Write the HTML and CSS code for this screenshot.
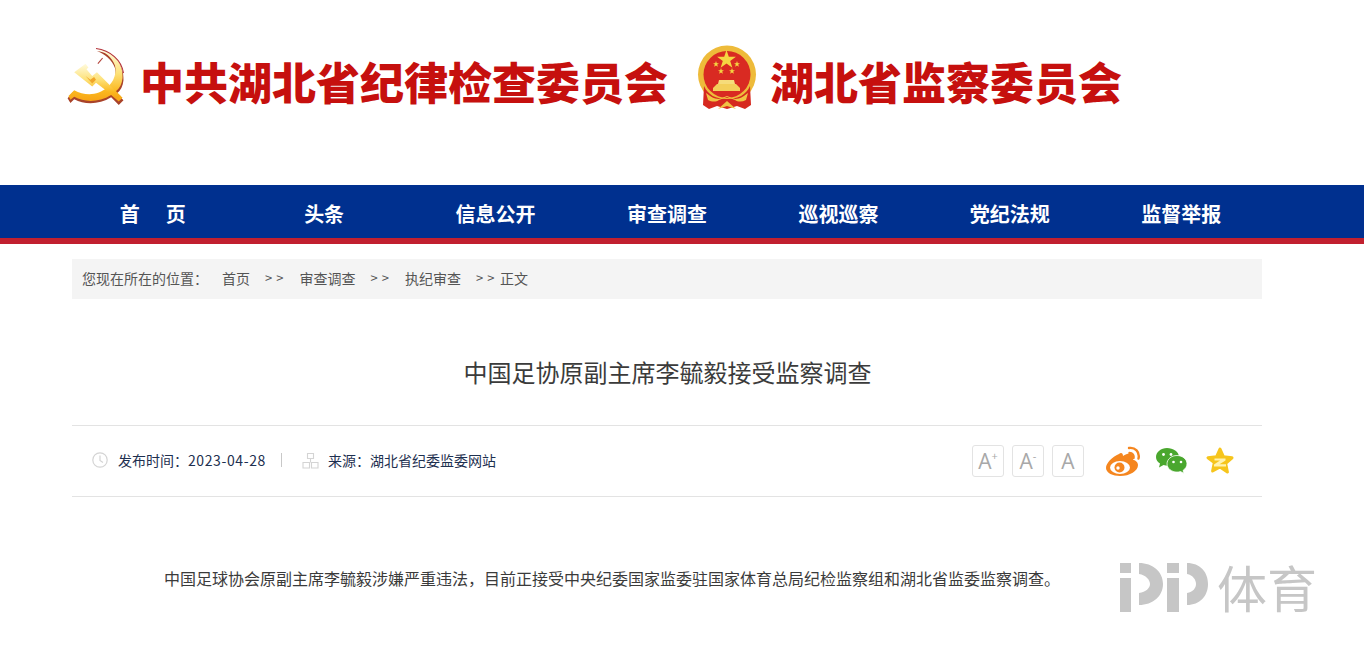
FILE: index.html
```html
<!DOCTYPE html>
<html lang="zh-CN">
<head>
<meta charset="utf-8">
<title>中国足协原副主席李毓毅接受监察调查</title>
<link rel="stylesheet" href="styles.css">
</head>
<body>
<header class="masthead">
  <svg class="party" viewBox="-2 -2 76 76" width="72" height="72">
    <defs>
      <linearGradient id="gold" x1="0" y1="0" x2="0" y2="1"><stop offset="0" stop-color="#fffbe0"/><stop offset=".45" stop-color="#fde27a"/><stop offset=".8" stop-color="#fbb81f"/><stop offset="1" stop-color="#f7a315"/></linearGradient>
    </defs>
    <path d="M37 8C54 10 66 22 65 39c-.5 6-3 11-7 14l7 7-5 5-8-8C39 65 24 65 13 59l-4 4-3-5 6-7C24 58 38 58 48 49 55 43 58 34 56 26 53 17 45 11 37 8z" fill="#a9432a" transform="translate(0 1.500)"/>
    <path d="M37 8C54 9 65 22 64 38c-.5 6-3 11-7 14l7 7-4 4-8-7C39 64 24 64 13 58l-4 3-2-4 6-6C24 57 38 57 48 48 55 42 58 33 56 25 53 16 45 10 37 8z" fill="url(#gold)"/>
    <path d="M13 32l12-9 3 4-2 2 6 7 5-4L62 57l-4 3-22-17-4 4z" fill="url(#gold)"/>
    <path d="M25 36l7 8 4-4-2-3-4 3z" fill="#f1a62a"/>
    <path d="M36 7C51 9 63 19 65 33" fill="none" stroke="#b3323a" stroke-width="1.200"/>
    <path d="M43 17l-5 6" fill="none" stroke="#b3423a" stroke-width="1.200"/>
  </svg>
  <h1 class="org org-party">中共湖北省纪律检查委员会</h1>
  <svg class="emblem" viewBox="0 0 72 72" width="72" height="72">
    <circle cx="35" cy="34.500" r="29" fill="#eebb3a"/>
    <circle cx="35" cy="34.500" r="23.500" fill="#d92a22"/>
    <path d="M34.500 10l2.300 6.700h7.100l-5.700 4.200 2.200 6.800-5.900-4.200-5.900 4.200 2.200-6.800-5.700-4.200h7.100z" fill="#f5d642"/>
    <path d="M24 21l.8 2.200H27l-1.800 1.300.7 2.200-1.900-1.300-1.900 1.300.7-2.200-1.800-1.300h2.200zM45 21l.8 2.200H48l-1.800 1.300.7 2.200-1.900-1.300-1.900 1.300.7-2.200-1.800-1.300h2.200zM29 28l.8 2.200H32l-1.800 1.300.7 2.200-1.900-1.300-1.900 1.300.7-2.200-1.800-1.300h2.200zM40 28l.8 2.200H43l-1.800 1.300.7 2.200-1.900-1.300-1.900 1.300.7-2.200-1.800-1.300h2.200z" fill="#f5d642"/>
    <path d="M26 44l1-4h15l1 4z" fill="#f6dc7a"/>
    <path d="M21 51v-3l4-4h19l4 4v3z" fill="#f3cf5a"/>
    <path d="M12 46c4 9 12 13 23 13s19-4 23-13l1 19-6 4-8-3-10 3-10-3-8 3-6-4z" fill="#d6291f"/>
    <path d="M14 53c4 3 8 6 13 6l8-3 8 3c5 0 9-3 13-6l-2 7c-4 2-8 2-11 0l-8-3-8 3c-3 2-7 2-11 0z" fill="#f0c343"/>
    <path d="M26 69l9-8 9 8-9-3z" fill="#f0c343"/>
  </svg>
  <h1 class="org org-state">湖北省监察委员会</h1>
</header>

<nav class="nav">
  <ul class="nav-list">
    <li><a class="nav-link nav-link-home">首　页</a></li>
    <li><a class="nav-link">头条</a></li>
    <li><a class="nav-link">信息公开</a></li>
    <li><a class="nav-link">审查调查</a></li>
    <li><a class="nav-link">巡视巡察</a></li>
    <li><a class="nav-link">党纪法规</a></li>
    <li><a class="nav-link">监督举报</a></li>
  </ul>
</nav>

<main class="wrap">
  <div class="crumbs">
    <span class="crumb-label">您现在所在的位置：</span>
    <a class="crumb">首页</a><span class="sep">&gt;&gt;</span>
    <a class="crumb">审查调查</a><span class="sep">&gt;&gt;</span>
    <a class="crumb">执纪审查</a><span class="sep last">&gt;&gt;</span>
    <span class="crumb">正文</span>
  </div>

  <h2 class="title">中国足协原副主席李毓毅接受监察调查</h2>

  <div class="meta">
    <div class="meta-left">
      <svg class="mi" viewBox="0 0 16 16" width="16" height="16"><circle cx="8" cy="8" r="7.200" fill="none" stroke="#d4d4d4" stroke-width="1.200"/><path d="M8 3.500V8.500l3 2" fill="none" stroke="#d4d4d4" stroke-width="1.200"/></svg>
      <span class="meta-date">发布时间：<span class="digits">2023-04-28</span></span>
      <span class="bar"></span>
      <svg class="mi" viewBox="0 0 17 17" width="17" height="17"><path d="M5.500 1.500h6v5h-6zM1 10.500h6.500v5.500H1zM9.500 10.500H16v5.500H9.500zM8.500 6.500v4" fill="none" stroke="#d4d4d4" stroke-width="1.100"/></svg>
      <span class="meta-src">来源：湖北省纪委监委网站</span>
    </div>
    <div class="meta-right">
      <span class="size">A<sup class="mark">+</sup></span>
      <span class="size">A<sup class="mark">-</sup></span>
      <span class="size">A</span>
      <svg class="share s-weibo" viewBox="0 0 34 30" width="34" height="30">
        <path d="M13 8C6 11 0 17 0 22c0 5 7 8 14 8 10 0 18-5 18-11 0-3-3-5-5-5 1-3 0-6-2-6-2-1-5 0-8 2 0-3-2-4-4-2z" fill="#f5861f"/>
        <ellipse cx="14" cy="21.500" rx="10" ry="6.500" fill="#fff"/>
        <circle cx="13.500" cy="21.500" r="5" fill="#f5861f"/>
        <circle cx="12" cy="22" r="1.700" fill="#fff"/>
        <path d="M23 2c6-1 11 4 9.500 10.500M23.500 7c3 0 4.500 2 4 5" fill="none" stroke="#f5861f" stroke-width="2.400" stroke-linecap="round"/>
      </svg>
      <svg class="share s-wechat" viewBox="0 0 32 26" width="32" height="26">
        <path d="M11 0C5 0 0 4 0 9c0 3 1.500 5 4 6.500L3 19.500l4.500-2.500c1.500.5 3 .7 4.500.7 6 0 11-4 11-9S17 0 11 0z" fill="#4aa72e"/>
        <path d="M21 7.500c-5.500 0-10 3.700-10 8.300s4.500 8.300 10 8.300c1.300 0 2.500-.2 3.500-.6l3.500 2-1-3c2.500-1.700 4-4 4-6.700 0-4.600-4.500-8.300-10-8.300z" fill="#4aa72e" stroke="#fff" stroke-width=".8"/>
        <circle cx="7.500" cy="6.500" r="1.400" fill="#fff"/><circle cx="15" cy="6.500" r="1.400" fill="#fff"/><circle cx="17.500" cy="14" r="1.300" fill="#fff"/><circle cx="25" cy="14" r="1.300" fill="#fff"/>
      </svg>
      <svg class="share s-qzone" viewBox="0 0 28 28" width="28" height="28">
        <path d="M14 2l3.500 7.800 8.500 1-6.300 5.700 1.700 8.500L14 20l-7.400 4 1.700-8.500L2 10.800l8.500-1z" fill="#f6c51c" stroke="#f6c51c" stroke-width="3" stroke-linejoin="round"/>
        <path d="M8.500 11.500h11v2l-6 3.800h6.500v2.200H8v-2l6-4H8.500z" fill="#fff3b0"/>
      </svg>
    </div>
  </div>

  <p class="body">中国足球协会原副主席李毓毅涉嫌严重违法，目前正接受中央纪委国家监委驻国家体育总局纪检监察组和湖北省监委监察调查。</p>
</main>

<div class="watermark">
  <svg class="wm-logo" viewBox="0 0 90 52" width="90" height="52">
    <path d="M1 1h11v10H1zM1 16h11v34H1zM20 1c14 0 24 9 24 21s-10 21-24 21V31c7-1 11-5 11-9s-4-9-11-10zM48 1h12v10H48zM48 16h12v34H48zM68 1c13 0 21 9 21 21s-8 21-21 21V31c6-1 9-5 9-9s-3-9-9-10z" fill="#c6c6c6"/>
  </svg>
  <span class="wm-text">体育</span>
</div>
</body>
</html>
```
FILE: styles.css
```css
* { box-sizing: border-box; }
html, body { margin: 0; padding: 0; height: 661px; overflow: hidden; background: #fff; }
body { position: relative; font-family: "Noto Sans CJK SC", "Liberation Sans", sans-serif; color: #333; }
h1, h2, p, ul { margin: 0; padding: 0; }

.masthead { height: 185px; display: flex; align-items: flex-start; padding: 40px 0 0 60px; }
.party { margin-right: 8px; flex: none; }
.emblem { margin: 0 6px 0 24px; flex: none; }
.org { font-size: 44px; line-height: 64px; margin-top: 9px; font-weight: 900; color: #c6100e; white-space: nowrap; }

.nav { height: 59px; background: #00308f; border-bottom: 6px solid #c1202f; }
.nav-list { list-style: none; width: 1200px; margin-left: 67px; display: grid; grid-template-columns: repeat(7, 1fr); }
.nav-link { display: block; height: 53px; line-height: 58px; text-align: center; color: #fff; font-size: 20px; font-weight: 700; }
.nav-link-home { letter-spacing: 3px; text-indent: 3px; }

.wrap { width: 1190px; margin: 15px 0 0 72px; }
.crumbs { height: 40px; padding: 0 0 3px 10px; background: #f4f4f4; display: flex; align-items: center; font-size: 14px; color: #555; white-space: nowrap; }
.crumb-label { width: 140px; }
.sep { margin: 0 15px; width: 19.5px; letter-spacing: 4px; font-size: 13px; }
.sep.last { margin-right: 4.500px; }

.title { margin-top: 53px; height: 41px; font-size: 24px; line-height: 40px; font-weight: 400; text-align: center; padding-left: 1px; color: #3b3b3b; }

.meta { margin-top: 32px; height: 72px; padding: 0 28px 2px 20px; border-top: 1px solid #e3e3e3; border-bottom: 1px solid #e3e3e3; display: flex; justify-content: space-between; align-items: center; font-size: 14px; color: #1e3050; }
.meta-left, .meta-right { display: flex; align-items: center; }
.meta-right { margin-top: 2px; }
.mi { flex: none; }
.meta-date { margin-left: 10px; }
.digits { letter-spacing: .6px; }
.bar { width: 1px; height: 14px; background: #c8c8c8; margin: 0 20px 0 15px; }
.meta-src { margin-left: 9px; }
.size { width: 32px; height: 32px; margin-right: 8px; border: 1px solid #e3e3e3; border-radius: 3px; display: flex; align-items: center; justify-content: center; font-family: "Open Sans", sans-serif; font-size: 21px; font-weight: 400; color: #a8a8a8; }
.mark { font-size: 11px; line-height: 1; margin-top: -12px; }
.share { flex: none; }
.s-weibo { margin: 0 16px 0 14px; }
.s-wechat { margin-right: 18px; }

.body { margin-top: 67px; padding-left: 92px; font-size: 16px; line-height: 28px; color: #3b3b3b; white-space: nowrap; }

.watermark { position: absolute; left: 1119px; top: 562px; display: flex; align-items: center; }
.wm-logo { flex: none; }
.wm-text { margin-left: 8px; margin-top: -4px; font-size: 50px; line-height: 52px; font-weight: 400; color: #c6c6c6; }
```
